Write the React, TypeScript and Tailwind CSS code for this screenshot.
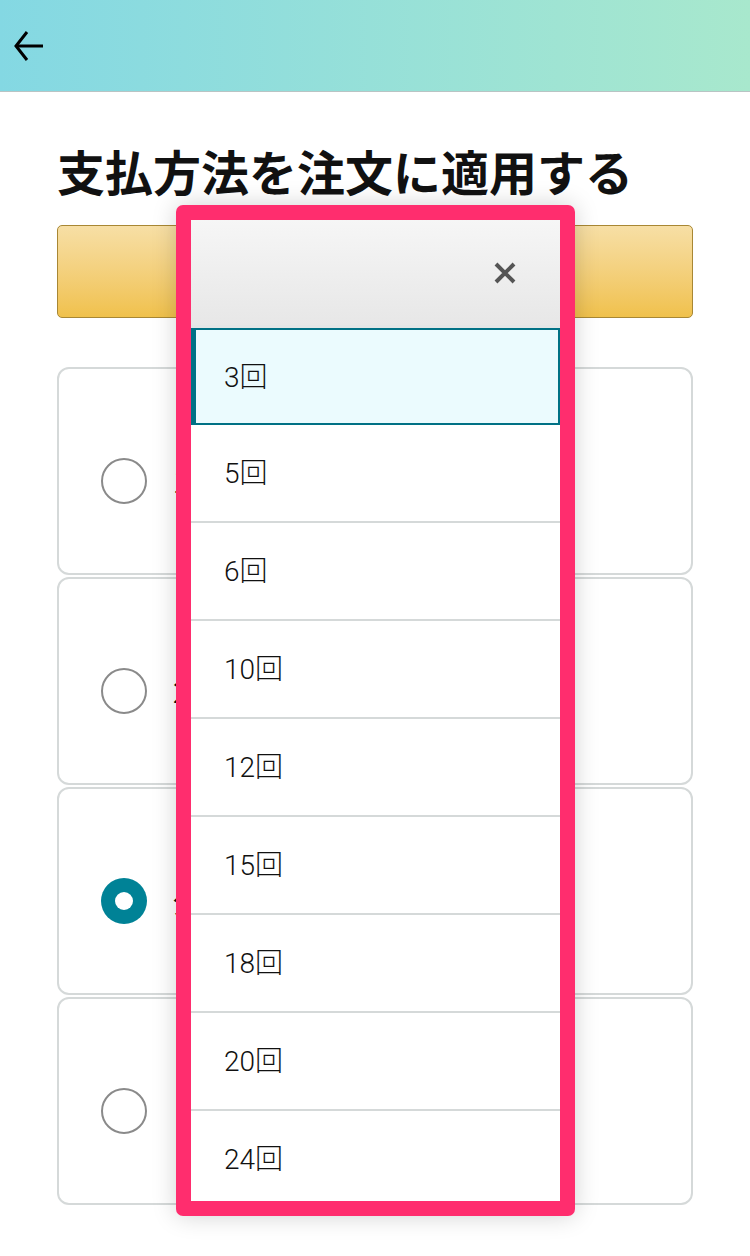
import { useState } from "react";

const counts = ["3回", "5回", "6回", "10回", "12回", "15回", "18回", "20回", "24回"];

const options = [
  { id: 1, label: "1回払い", checked: false },
  { id: 2, label: "2回払い", checked: false },
  { id: 3, label: "分割払い", checked: true },
  { id: 4, label: "リボ払い", checked: false },
];

export default function App() {
  const [selected, setSelected] = useState("3回");

  return (
    <div
      className="relative w-[750px] min-h-[1256px] bg-white text-[#111]"
      style={{ fontFamily: '"Noto Sans CJK JP", "Noto Sans", sans-serif' }}
    >
      <header className="h-[92px] border-b border-[#b9c4c4] bg-gradient-to-r from-[#84d8e3] to-[#a8e8cd] flex items-center px-[14px]">
        <svg width="30" height="32" viewBox="0 0 30 32" fill="none" stroke="#000" strokeWidth="3">
          <path d="M29 16H3" />
          <path d="M13 2L2 16L13 30" strokeLinejoin="miter" />
        </svg>
      </header>

      <main className="px-[57px]">
        <h1 className="pt-[47px] text-[48px] leading-[62px] font-bold">
          支払方法を注文に適用する
        </h1>

        <button className="mt-[24px] w-full h-[93px] rounded-[5px] border border-[#a88734] bg-gradient-to-b from-[#f7dfa5] to-[#f0c14b]" />

        <ul className="mt-[45px] flex flex-col gap-[2px]">
          {options.map((o) => (
            <li
              key={o.id}
              className="h-[208px] rounded-[12px] border-2 border-[#d5d9d9] flex items-center pl-[42px]"
            >
              {o.checked ? (
                <span className="mt-[20px] w-[46px] h-[46px] rounded-full bg-[#008296] flex items-center justify-center">
                  <span className="w-[18px] h-[18px] rounded-full bg-white" />
                </span>
              ) : (
                <span className="mt-[20px] w-[46px] h-[46px] rounded-full border-2 border-[#8a8a8a] bg-white" />
              )}
              <span className="mt-[20px] ml-[26px] text-[28px]">{o.label}</span>
            </li>
          ))}
        </ul>
      </main>

      <div className="absolute left-[176px] top-[205px] w-[399px] h-[1011px] rounded-[7px] border-[15px] border-[#ff2d6e] bg-white shadow-[0_0_24px_rgba(0,0,0,0.18)] overflow-hidden flex flex-col">
        <div className="h-[108px] shrink-0 bg-gradient-to-b from-[#f6f6f6] to-[#e7e7e7] border-b-[3px] border-[#e3e6e6] flex items-center justify-end pr-[44px]">
          <svg width="22" height="22" viewBox="0 0 22 22" stroke="#555" strokeWidth="4">
            <path d="M2 2L20 20M20 2L2 20" />
          </svg>
        </div>
        {counts.map((c) => (
          <div
            key={c}
            onClick={() => setSelected(c)}
            style={{ fontFamily: 'Roboto, "Noto Sans CJK JP", sans-serif' }}
            className={
              c === selected
                ? "h-[97px] shrink-0 flex items-center pl-[28px] pt-[2px] bg-[#ebfbfe] border-2 border-l-[5px] border-[#007185] text-[28px] font-light text-[#111]"
                : "h-[98px] shrink-0 flex items-center pl-[33px] pt-[2px] border-b-2 border-[#d5d9d9] text-[28px] font-light text-[#111]"
            }
          >
            {c}
          </div>
        ))}
      </div>
    </div>
  );
}
